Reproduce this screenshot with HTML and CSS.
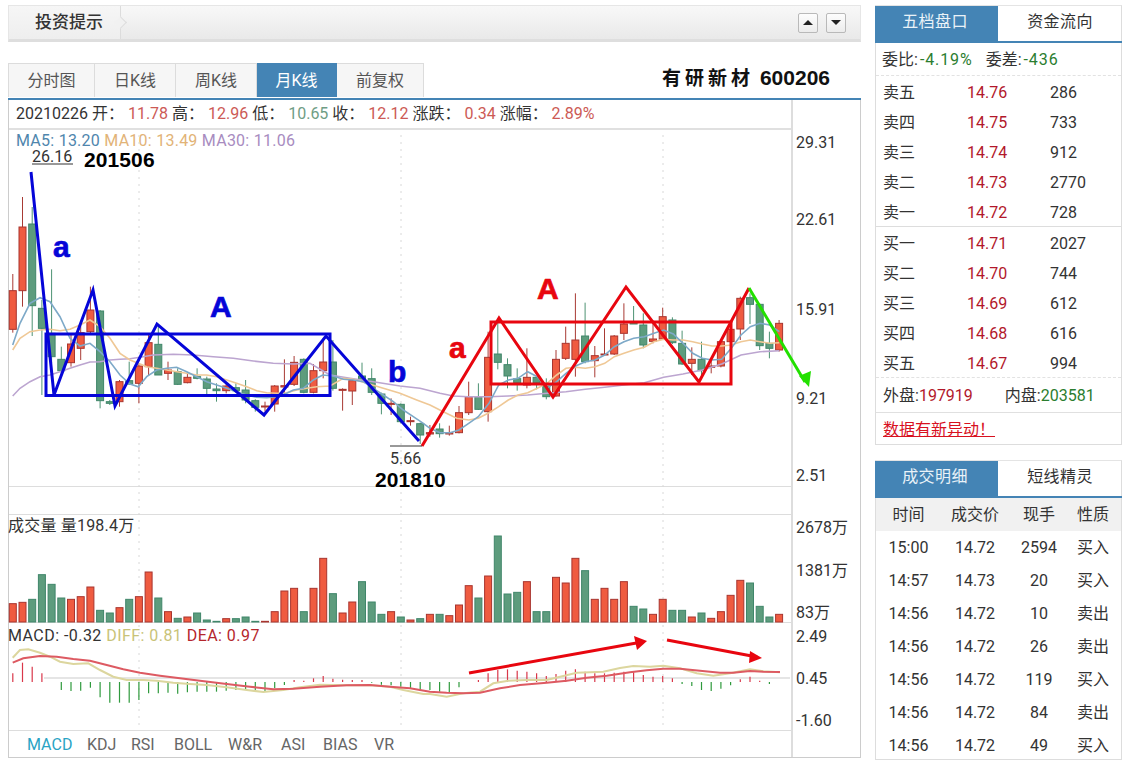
FILE: index.html
```html
<!DOCTYPE html>
<html lang="zh">
<head>
<meta charset="utf-8">
<title>有研新材 600206</title>
<link rel="stylesheet" href="styles.css">
</head>
<body>
<div class="page">
  <main class="left">
    <div class="topbar">
      <div class="topbar-title">投资提示</div>
      <div class="topbar-btns">
        <button class="tri-btn"><span class="tri tri-up"></span></button>
        <button class="tri-btn"><span class="tri tri-down"></span></button>
      </div>
    </div>
    <div class="tabs">
      <a class="tab tab-a">分时图</a>
      <a class="tab tab-b">日K线</a>
      <a class="tab tab-b">周K线</a>
      <a class="tab tab-m active">月K线</a>
      <a class="tab tab-c">前复权</a>
      <div class="stock-title"><span class="stock-name">有研新材</span> 600206</div>
    </div>
    <div class="chart">
      <div class="plots">
        <div class="info">20210226 开： <b class="up">11.78</b> 高： <b class="up">12.96</b> 低： <b class="down">10.65</b> 收： <b class="up">12.12</b> 涨跌： <b class="up">0.34</b> 涨幅： <b class="up">2.89%</b></div>
        <div class="pane pane-price"><span class="ma5">MA5: 13.20</span> <span class="ma10">MA10: 13.49</span> <span class="ma30">MA30: 11.06</span></div>
        <div class="pane pane-gap"></div>
        <div class="pane pane-vol">成交量 量198.4万</div>
        <div class="pane pane-macd">MACD: -0.32 <span class="diff">DIFF: 0.81</span> <span class="dea">DEA: 0.97</span></div>
        <div class="indicators">
          <a class="on">MACD</a><a>KDJ</a><a>RSI</a><a>BOLL</a><a>W&amp;R</a><a>ASI</a><a>BIAS</a><a>VR</a>
        </div>
      </div>
      <div class="axis">
        <span style="top:32px">29.31</span>
        <span style="top:109px">22.61</span>
        <span style="top:199px">15.91</span>
        <span style="top:288px">9.21</span>
        <span style="top:365px">2.51</span>
        <span style="top:417px">2678万</span>
        <span style="top:460px">1381万</span>
        <span style="top:502px">83万</span>
        <span style="top:526px">2.49</span>
        <span style="top:568px">0.45</span>
        <span style="top:610px">-1.60</span>
      </div>
      <svg class="canvas" viewBox="8 100 852 658" width="852" height="658" xmlns="http://www.w3.org/2000/svg">
        <g class="grid">
          <line x1="139" y1="135" x2="139" y2="730"/>
          <line x1="401" y1="135" x2="401" y2="730"/>
          <line x1="663" y1="135" x2="663" y2="730"/>
        </g>
        <line class="zero" x1="44" y1="678" x2="790" y2="678"/>
        <g id="candles"></g>
        <g id="volumes"></g>
        <g id="hist"></g>
        <g id="lines"></g>

        <g class="ov-blue">
          <rect x="46" y="334" width="284" height="61.5"/>
          <polyline points="31,172 54,395 93,290 115,406 157,324 264,415 326,336 419,441"/>
        </g>
        <g class="ov-red">
          <rect x="491" y="322" width="240" height="62"/>
          <polyline points="422,446 499,318 553,397 626,287 699,382 749,288"/>
          <line class="arrow-line" x1="469" y1="673" x2="642" y2="642"/>
          <polygon class="arrow-head" points="647,641 634,636 637,650"/>
          <line class="arrow-line" x1="667" y1="640" x2="757" y2="657"/>
          <polygon class="arrow-head" points="762,658 750,651 749,663"/>
        </g>
        <g class="ov-green">
          <line x1="749" y1="288" x2="805" y2="382"/>
          <polygon points="809,387 799,376 811,371"/>
        </g>

        <text class="lbl-num" x="32" y="162">26.16</text>
        <line class="lbl-rule" x1="32" y1="164" x2="73" y2="164"/>
        <text class="lbl-date" x="84" y="167">201506</text>
        <text class="lbl-big blue" x="53" y="257">a</text>
        <text class="lbl-big blue" x="210" y="317">A</text>
        <text class="lbl-big blue" x="388" y="382">b</text>
        <text class="lbl-big red" x="449" y="358">a</text>
        <text class="lbl-big red" x="537" y="299">A</text>
        <line class="lbl-rule" x1="390" y1="446" x2="422" y2="446"/>
        <text class="lbl-num" x="390" y="464">5.66</text>
        <text class="lbl-date" x="375" y="487">201810</text>
      </svg>
    </div>
  </main>

  <aside class="right">
    <section class="box box-quote">
      <div class="box-tabs">
        <a class="box-tab active">五档盘口</a>
        <a class="box-tab">资金流向</a>
      </div>
      <div class="ratio"><span>委比:<b class="gr">-4.19%</b></span><span>委差:<b class="gr">-436</b></span></div>
      <div class="levels levels-sell">
        <div class="level"><span>卖五</span><b>14.76</b><span>286</span></div>
        <div class="level"><span>卖四</span><b>14.75</b><span>733</span></div>
        <div class="level"><span>卖三</span><b>14.74</b><span>912</span></div>
        <div class="level"><span>卖二</span><b>14.73</b><span>2770</span></div>
        <div class="level"><span>卖一</span><b>14.72</b><span>728</span></div>
      </div>
      <div class="levels levels-buy">
        <div class="level"><span>买一</span><b>14.71</b><span>2027</span></div>
        <div class="level"><span>买二</span><b>14.70</b><span>744</span></div>
        <div class="level"><span>买三</span><b>14.69</b><span>612</span></div>
        <div class="level"><span>买四</span><b>14.68</b><span>616</span></div>
        <div class="level"><span>买五</span><b>14.67</b><span>994</span></div>
      </div>
      <div class="outer"><span>外盘:<b class="rd">197919</b></span><span>内盘:<b class="gr">203581</b></span></div>
      <div class="alert"><a>数据有新异动！</a></div>
    </section>

    <section class="box box-trades">
      <div class="box-tabs box-tabs-b">
        <a class="box-tab active">成交明细</a>
        <a class="box-tab">短线精灵</a>
      </div>
      <div class="trade trade-head"><span>时间</span><span>成交价</span><span>现手</span><span>性质</span></div>
      <div class="trade"><span>15:00</span><span>14.72</span><span>2594</span><span>买入</span></div>
      <div class="trade"><span>14:57</span><span>14.73</span><span>20</span><span>买入</span></div>
      <div class="trade"><span>14:56</span><span>14.72</span><span>10</span><span>卖出</span></div>
      <div class="trade"><span>14:56</span><span>14.72</span><span>26</span><span>卖出</span></div>
      <div class="trade"><span>14:56</span><span>14.72</span><span>119</span><span>买入</span></div>
      <div class="trade"><span>14:56</span><span>14.72</span><span>84</span><span>卖出</span></div>
      <div class="trade"><span>14:56</span><span>14.72</span><span>49</span><span>买入</span></div>
    </section>
  </aside>
</div>
<script src="chart.js"></script>
</body>
</html>
```
FILE: styles.css
```css
* { box-sizing: border-box; }
html, body { margin: 0; padding: 0; background: #fff; overflow: hidden; }
body {
  font-family: Roboto, "Noto Sans CJK SC", sans-serif;
  font-size: 16px;
  color: #333;
}
b { font-weight: 400; }
a { cursor: pointer; }

.page {
  display: flex;
  gap: 14px;
  padding: 5px 0 0 8px;
  height: 767px;
}
.left { width: 853px; flex: none; }
.right { width: 247px; flex: none; display: flex; flex-direction: column; gap: 15px; }

/* top bar */
.topbar {
  height: 37px;
  display: flex;
  justify-content: space-between;
  align-items: center;
  border: 1px solid #e6e6e6;
  border-bottom: 3px solid #dedede;
  background: linear-gradient(#f8f8f8, #e9e9e9);
}
.topbar-title {
  position: relative;
  width: 112px;
  height: 100%;
  padding-left: 26px;
  font-size: 17px;
  line-height: 32px;
  font-weight: 500;
  color: #333;
  background: linear-gradient(#f6f6f6, #eeeeee);
  border-right: 1px solid #dcdcdc;
}
.topbar-title::after {
  content: "";
  position: absolute;
  right: -5px;
  top: 12px;
  width: 8px;
  height: 8px;
  transform: rotate(45deg);
  background: #f1f1f1;
  border-top: 1px solid #dcdcdc;
  border-right: 1px solid #dcdcdc;
}
.topbar-btns { display: flex; gap: 8px; padding-right: 14px; }
.tri-btn {
  width: 20px;
  height: 20px;
  padding: 0;
  display: flex;
  align-items: center;
  justify-content: center;
  background: linear-gradient(#fdfdfd, #ececec);
  border: 1px solid #b9b9b9;
  border-radius: 2px;
}
.tri { width: 0; height: 0; border-left: 5px solid transparent; border-right: 5px solid transparent; }
.tri-up { border-bottom: 5px solid #222; }
.tri-down { border-top: 5px solid #222; }

/* tabs */
.tabs {
  margin-top: 21px;
  height: 37px;
  display: flex;
  align-items: flex-start;
  border-bottom: 2px solid #4484b5;
  position: relative;
}
.tab {
  height: 34px;
  line-height: 34px;
  text-align: center;
  background: #f6f6f6;
  border: 1px solid #dcdcdc;
  border-left: 0;
  border-bottom: 0;
  color: #555;
}
.tab-a { width: 87px; border-left: 1px solid #dcdcdc; }
.tab-b { width: 81px; }
.tab-m { width: 80px; }
.tab-c { width: 87px; }
.tab.active { background: #4484b5; border-color: #4484b5; color: #fff; }
.stock-title {
  margin-left: auto;
  margin-right: 31px;
  font-family: "Liberation Sans", "Noto Sans CJK SC", sans-serif;
  font-size: 21px;
  font-weight: 700;
  color: #111;
  line-height: 30px;
}
.stock-name { font-size: 19px; letter-spacing: 4px; }

/* chart */
.chart {
  position: relative;
  display: flex;
  height: 658px;
  border-left: 1px solid #ccc;
  border-right: 1px solid #ccc;
  border-bottom: 1px solid #ccc;
}
.plots { width: 782px; flex: none; display: flex; flex-direction: column; }
.info {
  height: 30px;
  line-height: 27px;
  padding-left: 7px;
  white-space: nowrap;
  border-bottom: 2px solid #e0e0e0;
  color: #333;
}
.up { color: #cc5a55; }
.down { color: #6f9d85; }
.pane { border-bottom: 1px solid #ddd; white-space: nowrap; }
.pane-price { height: 357px; padding-left: 7px; line-height: 22px; letter-spacing: .25px; }
.pane-gap { height: 28px; }
.pane-vol { height: 108px; line-height: 22px; letter-spacing: .2px; text-indent: -1px; }
.pane-macd { height: 108px; line-height: 26px; letter-spacing: .45px; text-indent: -1px; }
.ma5 { color: #4f86ad; }
.ma10 { color: #e2b377; }
.ma30 { color: #a88cbf; }
.diff { color: #c9c377; }
.dea { color: #b5262c; }
.indicators {
  flex: 1;
  display: grid;
  grid-template-columns: 60px 44px 43px 54px 53px 42px 51px auto;
  align-items: center;
  padding-left: 18px;
  color: #666;
}
.indicators .on { color: #29a3c4; }

.axis {
  flex: 1;
  position: relative;
  border-left: 2px solid #ddd;
}
.axis span {
  position: absolute;
  left: 3px;
  line-height: 22px;
  white-space: nowrap;
  color: #333;
}

.canvas { position: absolute; left: -1px; top: 0; pointer-events: none; overflow: visible; }
.grid line { stroke: #d8d8d8; stroke-width: 1; stroke-dasharray: 2 5; }
.zero { stroke: #ddd; stroke-width: 1.5; }
.ov-blue rect, .ov-blue polyline { fill: none; stroke: #0505d8; stroke-width: 3; }
.ov-red rect, .ov-red polyline { fill: none; stroke: #e8060f; stroke-width: 3; }
.arrow-line { stroke: #e8060f; stroke-width: 3; }
.arrow-head { fill: #e8060f; }
.ov-green line { stroke: #22e000; stroke-width: 3; }
.ov-green polygon { fill: #22e000; }
.lbl-num { font-family: Roboto, sans-serif; font-size: 16px; fill: #333; }
.lbl-rule { stroke: #333; stroke-width: 1; }
.lbl-date { font-family: "Liberation Sans", sans-serif; font-weight: 700; font-size: 21px; fill: #000; letter-spacing: .1px; }
.lbl-big { font-family: "Liberation Sans", sans-serif; font-weight: 700; font-size: 30px; stroke-width: .7; }
.lbl-big.blue { fill: #0505d8; stroke: #0505d8; }
.lbl-big.red { fill: #e8060f; stroke: #e8060f; }

.wick-r { stroke: #a83a34; stroke-width: 1; }
.wick-g { stroke: #4d9273; stroke-width: 1; }
.body-r { fill: #ef5b40; stroke: #a8352f; stroke-width: 1; }
.body-g { fill: #5d9c7d; stroke: #40866a; stroke-width: 1; }
.hist-r { stroke: #d9374a; stroke-width: 1.2; }
.hist-g { stroke: #2f9a3d; stroke-width: 1.2; }
.ml { fill: none; }
.ml-ma5 { stroke: #7da9c8; stroke-width: 1.6; }
.ml-ma10 { stroke: #efc896; stroke-width: 1.6; }
.ml-ma30 { stroke: #bca5d0; stroke-width: 1.6; }
.ml-diff { stroke: #dcd69e; stroke-width: 2; }
.ml-dea { stroke: #dd5a62; stroke-width: 2; }

/* right boxes */
.box { border: 1px solid #ddd; border-top: 1px solid #e4e4e4; }
.box-quote { height: 440px; }
.box-trades { height: 300px; }
.box-tabs { display: flex; height: 37px; border-bottom: 2px solid #4484b5; margin: 0 -1px; }
.box-tab {
  flex: 1;
  text-align: center;
  line-height: 31px;
  letter-spacing: .4px;
  color: #333;
  height: 35px;
}
.box-tab.active { flex: none; width: 123px; padding-right: 3px; background: #4484b5; color: #e9f2f8; }
.box-tabs-b .box-tab.active { height: 37px; }

.ratio {
  display: flex;
  gap: 13px;
  height: 33px;
  line-height: 34px;
  padding-left: 6px;
  border-bottom: 1px dashed #e2e2e2;
}
.ratio b { padding-left: 2px; letter-spacing: .9px; }
.gr { color: #2b7d2f; }
.rd { color: #b2182b; }
.levels-sell { border-bottom: 1px solid #ddd; }
.levels-buy { border-bottom: 1px dashed #e2e2e2; }
.level {
  display: grid;
  grid-template-columns: 84px 83px 1fr;
  height: 30px;
  line-height: 34px;
  padding-left: 7px;
}
.level b { color: #b2182b; }
.outer {
  display: flex;
  gap: 32px;
  height: 35px;
  line-height: 35px;
  padding-left: 7px;
  border-bottom: 1px solid #e0e0e0;
}
.alert { height: 32px; line-height: 33px; padding-left: 7px; }
.alert a { color: #d8111f; text-decoration: underline; padding-right: 6px; }

.trade {
  display: grid;
  grid-template-columns: 65px 68px 60px 48px;
  height: 33px;
  line-height: 33px;
  text-align: center;
}
.trade-head { background: #f1f1f1; }
```
FILE: chart.js
```javascript
(function () {
  var NS = 'http://www.w3.org/2000/svg';
  function add(group, name, attrs) {
    var el = document.createElementNS(NS, name);
    for (var k in attrs) el.setAttribute(k, attrs[k]);
    document.getElementById(group).appendChild(el);
    return el;
  }
  var X0 = 12.8, DX = 9.7;
  function cx(i) { return X0 + DX * i; }

  // [type, bodyTop, bodyBottom, wickTop, wickBottom] in 3x crop coordinates, y = 260 + v / 3
  var c = [
    ['r',92,208,42,218],['r',-99,92,-189,140],['g',-108,137,-159,228],['g',145,205,120,405],
    ['g',220,290,28,310],['g',298,332,260,345],['r',252,308,225,320],['r',218,265,195,300],
    ['r',150,215,80,220],['g',153,422,150,445],['g',425,430,420,435],['r',365,425,360,440],
    ['g',362,372,305,375],['r',318,370,310,430],['r',248,320,225,348],['g',253,345,195,345],
    ['r',330,340,305,360],['g',335,373,325,375],['r',352,368,340,370],['g',350,355,325,358],
    ['g',357,385,350,402],['g',387,392,370,425],['r',378,392,370,400],['g',383,392,370,395],
    ['g',390,420,360,430],['g',422,442,418,455],['r',438,441,425,455],['r',378,432,375,455],
    ['r',377,381,298,405],['r',307,373,288,378],['g',298,397,295,400],['r',332,397,312,400],
    ['r',306,332,235,355],['g',306,385,240,392],['r',388,390,385,452],['r',362,393,355,435],
    ['g',348,358,308,365],['g',356,397,325,405],['g',402,430,398,463],['r',430,433,415,465],
    ['g',433,485,430,490],['r',482,485,470,497],['g',491,525,488,552],['r',518,522,495,530],
    ['g',507,521,490,533],['r',518,522,497,527],['r',458,518,438,520],['r',410,458,365,465],
    ['g',410,448,370,450],['r',292,455,215,485],['g',282,307,175,328],['g',314,348,295,385],
    ['g',356,368,325,392],['r',352,375,265,385],['g',352,368,350,388],['g',378,410,355,418],
    ['r',298,408,270,410],['r',250,295,200,300],['r',240,298,100,350],['g',228,305,128,310],
    ['r',287,302,258,352],['r',282,285,205,285],['r',228,282,225,285],['r',192,220,130,240],
    ['g',188,192,138,192],['g',195,255,160,265],['r',237,244,185,250],['r',170,237,143,240],
    ['g',180,248,172,252],['g',250,312,212,315],['r',298,310,262,345],['g',298,332,245,345],
    ['r',318,322,300,340],['r',245,318,240,322],['r',208,245,195,250],['r',115,207,110,240],
    ['g',113,133,100,192],['g',133,257,130,270],['g',250,265,215,295],['r',190,270,180,275]
  ];
  function py(v) { return 260 + v / 3; }
  c.forEach(function (d, i) {
    var x = cx(i);
    add('candles', 'line', { 'class': 'wick-' + d[0], x1: x, x2: x, y1: py(d[3]), y2: py(d[4]) });
    add('candles', 'rect', { 'class': 'body-' + d[0], x: x - 3.5, y: py(d[1]), width: 7, height: Math.max(py(d[2]) - py(d[1]), 1) });
  });

  // volume tops in 3x crop coordinates, y = 510 + v / 3
  var v = [281,277,268,194,223,264,268,260,231,301,309,293,268,260,186,264,305,325,321,309,
    330,334,326,326,321,334,334,305,243,235,305,235,145,251,309,276,215,276,313,305,
    321,330,326,313,313,317,285,227,264,198,78,252,247,215,305,305,202,219,145,182,
    268,235,268,215,289,297,313,268,301,301,321,309,325,305,256,211,219,289,321,313];
  var vtypes = ['r','r','g','g','g','g','r','r','r','g','g','r','g','r','r','g','r','g','r','g',
    'g','g','r','g','g','g','r','r','r','r','g','r','r','g','r','r','g','g','g','r',
    'g','r','g','r','g','r','r','r','g','r','g','g','g','r','g','g','r','r','r','g',
    'r','r','r','r','g','g','r','r','g','g','r','g','r','r','r','r','g','g','g','r'];
  var base = 510 + 336 / 3;
  v.forEach(function (t, i) {
    var y = 510 + t / 3;
    add('volumes', 'rect', { 'class': 'body-' + vtypes[i], x: cx(i) - 3.5, y: y, width: 7, height: base - y });
  });

  // MACD histogram ends in 3x crop coordinates, measured from the 516 baseline
  var h = [490,458,470,490,516,540,543,542,533,562,578,578,578,570,550,550,548,551,547,545,
    545,545,542,540,540,544,544,534,525,510,512,505,498,506,509,510,510,518,524,526,
    530,536,540,540,545,548,532,516,510,490,480,478,482,485,490,498,492,482,478,485,
    490,490,488,485,487,495,500,498,505,522,528,540,543,536,526,508,500,512,522,516];
  h.forEach(function (t, i) {
    if (t === 516) return;
    add('hist', 'line', {
      'class': t < 516 ? 'hist-r' : 'hist-g',
      x1: cx(i), x2: cx(i), y1: 510 + 516 / 3, y2: 510 + t / 3
    });
  });

  function path(cls, sets, yBase) {
    var pts = [];
    sets.forEach(function (s) {
      for (var i = 0; i < s.p.length; i += 2) {
        pts.push((s.ox + s.p[i] / 3).toFixed(1) + ',' + (yBase + s.p[i + 1] / 3).toFixed(1));
      }
    });
    add('lines', 'polyline', { 'class': 'ml ' + cls, points: pts.join(' ') });
  }

  path('ml-ma30', [
    { ox: 0, p: [38,408,60,385,90,365,120,350,150,345,180,335,210,325,240,315,270,306,300,305,330,300,360,298,390,296,420,292,460,285,520,283,580,285,640,290,700,295,760,303,820,310,880,312,930,310,990,345,1050,355,1120,365,1200,378,1260,385] },
    { ox: 430, p: [0,392,30,400,70,408,116,410,177,410,235,408,293,405,351,400,408,395,466,388,524,382,582,375,643,368,701,352,759,342,817,330,875,312,933,285,990,275,1048,272] }
  ], 260);
  path('ml-ma10', [
    { ox: 0, p: [38,270,60,235,90,215,120,210,150,208,180,212,210,208,240,195,270,180,300,200,330,235,360,280,390,300,415,310,440,320,470,325,500,330,530,335,560,340,590,345,620,345,650,350,680,360,710,370,740,380,770,392,800,398,830,400,860,398,890,390,920,385,950,380,990,378,1030,355,1060,358,1100,370,1150,385,1200,400,1250,420] },
    { ox: 430, p: [0,435,40,455,80,475,116,480,145,475,177,458,206,440,235,420,264,405,293,398,322,385,351,370,380,345,408,325,437,322,466,325,495,320,524,310,553,290,582,280,611,270,643,262,672,245,701,238,730,240,759,240,788,245,817,252,846,258,875,258,904,255,933,245,961,240,990,245,1019,250,1048,248] }
  ], 260);
  path('ml-ma5', [
    { ox: 0, p: [38,255,60,190,90,130,120,113,150,125,180,170,210,235,240,258,270,250,300,275,330,305,360,345,390,372,415,380,440,350,470,330,500,325,530,322,560,335,590,350,620,365,650,375,680,385,710,395,740,405,770,412,800,413,830,410,860,400,880,390,910,385,940,360,968,345,1000,348,1030,358,1060,360,1090,365,1120,385,1150,405,1180,425,1210,450,1240,470,1270,490] },
    { ox: 430, p: [0,505,30,518,60,518,87,510,116,490,145,470,177,430,206,375,235,360,264,355,293,335,322,350,351,385,380,365,408,340,437,318,466,305,495,300,524,285,553,260,582,245,611,235,643,230,672,220,701,210,730,222,759,250,788,280,817,295,846,300,875,298,904,265,933,225,961,200,990,190,1019,195,1048,215] }
  ], 260);
  path('ml-diff', [
    { ox: 0, p: [38,443,60,420,85,418,120,428,150,440,180,455,220,462,265,460,300,480,340,500,380,510,430,510,470,512,520,518,570,522,620,525,680,532,740,540,790,546,850,540,900,532,960,524,1040,526,1110,526,1170,530,1210,540,1270,552] },
    { ox: 430, p: [0,552,50,560,100,550,150,545,190,520,235,512,290,510,350,510,400,498,440,488,520,485,570,474,610,468,660,470,700,467,750,475,800,490,850,497,900,490,960,478,1000,484,1050,487] }
  ], 510);
  path('ml-dea', [
    { ox: 0, p: [38,458,70,445,120,438,170,440,220,447,270,452,320,465,370,478,420,488,480,497,540,505,600,512,680,522,750,530,820,538,880,536,960,530,1040,526,1110,525,1170,530,1230,535] },
    { ox: 430, p: [0,545,50,548,100,550,150,548,210,535,270,525,350,518,410,512,470,503,530,497,600,487,650,481,700,476,750,476,810,482,870,488,910,488,960,483,1000,485,1050,486] }
  ], 510);
})();
```
